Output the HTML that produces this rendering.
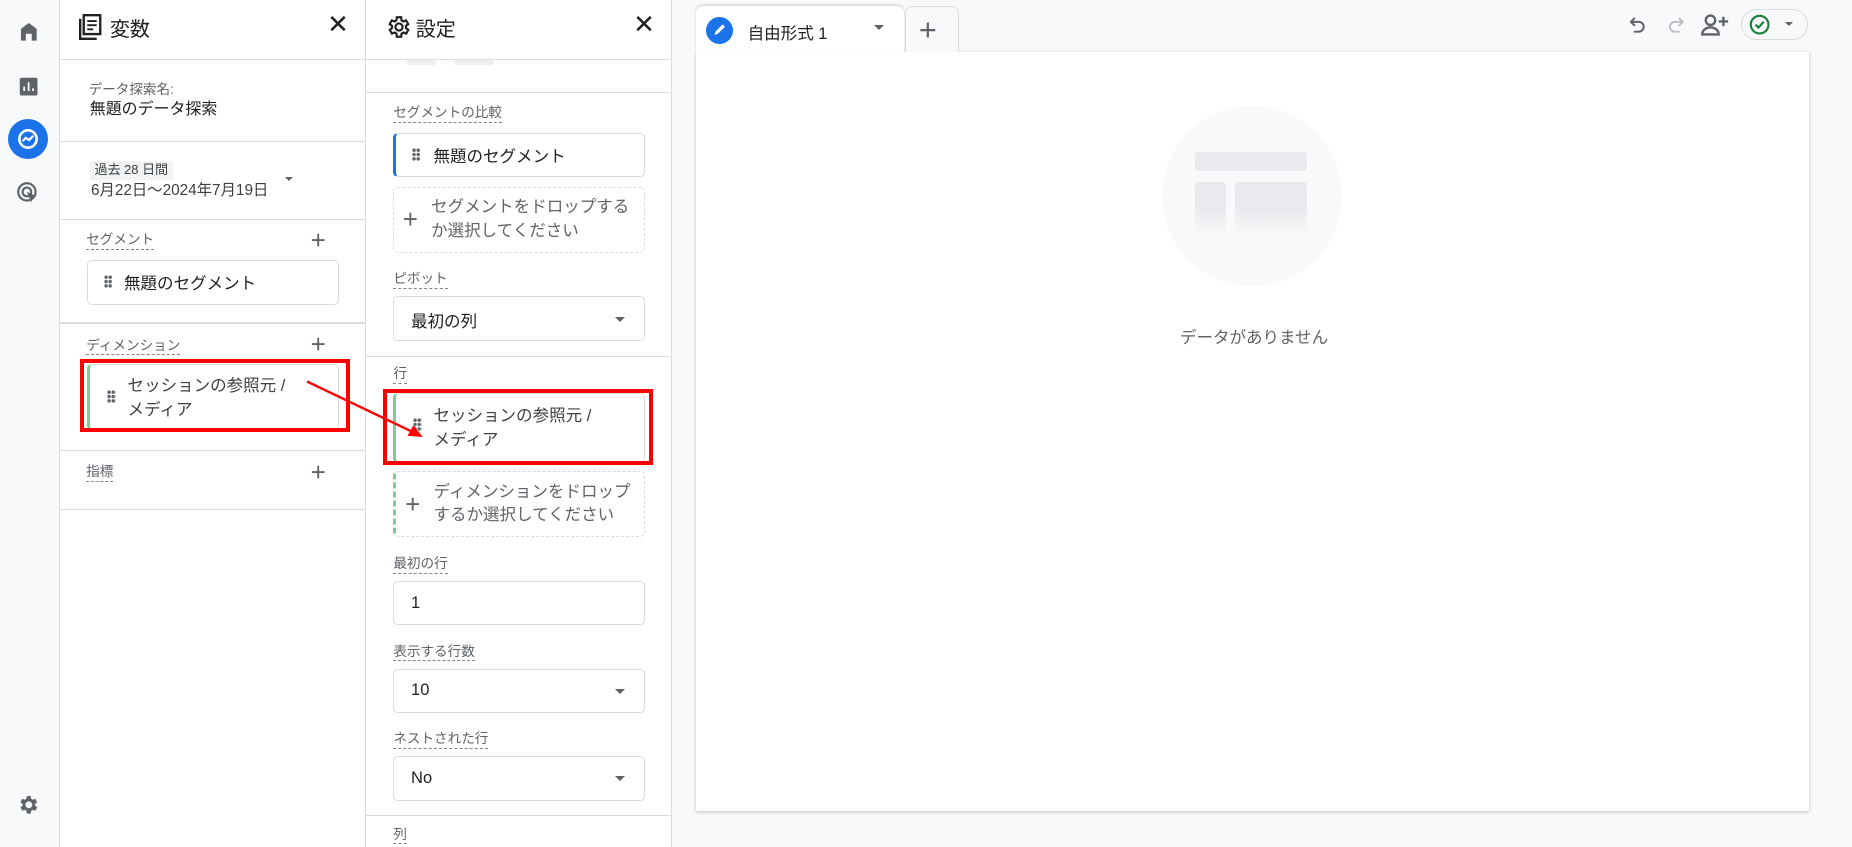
<!DOCTYPE html>
<html><head><meta charset="utf-8"><style>
*{box-sizing:border-box;margin:0;padding:0}
html,body{width:1852px;height:847px;overflow:hidden;background:#f8f9fa}
#w{zoom:1.18112;width:1568px;height:717px;position:relative;font-family:"Liberation Sans","Noto Sans CJK JP",sans-serif;color:#202124}
.a{position:absolute}
.hl{position:absolute;height:1px;background:#dadce0}
.lab{position:absolute;font-size:11.5px;color:#5f6368;border-bottom:1px dashed #80868b;line-height:15px}
.box{position:absolute;border:1px solid #dadce0;border-radius:4px;background:#fff}
.t14{font-size:14px;color:#3c4043}
.plus{position:absolute;font-size:22px;color:#5f6368;font-weight:300;line-height:20px}
.dots{position:absolute;width:7px;height:11px;background:radial-gradient(circle,#5f6368 1.4px,transparent 1.6px) 0 0/3.5px 3.7px}
.caret{position:absolute;width:0;height:0;border-left:5px solid transparent;border-right:5px solid transparent;border-top:5px solid #5f6368}
</style></head><body><div id="w">
<!-- rail -->
<div class="a" style="left:0;top:0;width:51px;height:717px;background:#f8f9fa;border-right:1px solid #dadce0"></div>
<svg class="a" style="left:14px;top:17px" width="20" height="20" viewBox="0 0 24 24"><path d="M12 3L4 9v12h5v-7h6v7h5V9z" fill="#5f6368"/></svg>
<svg class="a" style="left:15px;top:64px" width="18" height="18" viewBox="0 0 24 24"><rect x="2" y="2" width="20" height="20" rx="2" fill="#5f6368"/><path d="M7 17v-5M12 17V7M17 17v-3" stroke="#fff" stroke-width="2"/></svg>
<div class="a" style="left:7px;top:101px;width:34px;height:34px;border-radius:50%;background:#1a73e8"></div>
<svg class="a" style="left:13px;top:107px" width="22" height="22" viewBox="0 0 24 24"><circle cx="12" cy="12" r="8" fill="none" stroke="#fff" stroke-width="2.4"/><path d="M7 14l3-3 3 2 4-4" fill="none" stroke="#fff" stroke-width="2"/></svg>
<svg class="a" style="left:13px;top:152px" width="22" height="22" viewBox="0 0 24 24"><circle cx="11" cy="11" r="8" fill="none" stroke="#5f6368" stroke-width="2"/><circle cx="11" cy="11" r="4" fill="none" stroke="#5f6368" stroke-width="2"/><path d="M11 11l9 4-4 1-1 5z" fill="#5f6368"/></svg>
<svg class="a" style="left:14px;top:671px" width="20" height="20" viewBox="0 0 24 24"><path fill="#5f6368" d="M19.4 13a7.5 7.5 0 000-2l2.1-1.6-2-3.5-2.5 1a7 7 0 00-1.7-1L15 3h-4l-.4 2.9a7 7 0 00-1.7 1l-2.5-1-2 3.5L6.6 11a7.5 7.5 0 000 2l-2.1 1.6 2 3.5 2.5-1a7 7 0 001.7 1L11 21h4l.4-2.9a7 7 0 001.7-1l2.5 1 2-3.5zM13 15.5a3.5 3.5 0 110-7 3.5 3.5 0 010 7z" transform="translate(-1 0)"/></svg>
<!-- variables panel -->
<div class="a" style="left:51px;top:0;width:259px;height:717px;background:#fff;border-right:1px solid #dadce0"></div>
<svg class="a" style="left:67px;top:12px" width="20" height="22" viewBox="0 0 20 22"><rect x="4" y="1" width="14" height="16" fill="none" stroke="#202124" stroke-width="2"/><path d="M1 4v17h14" fill="none" stroke="#202124" stroke-width="2"/><path d="M7 6h8M7 9.5h8M7 13h5" stroke="#202124" stroke-width="1.6"/></svg>
<div class="a" style="left:93px;top:11px;font-size:17px">変数</div>
<div class="a" style="left:277px;top:8px;font-size:22px;color:#202124">✕</div>
<div class="hl" style="left:51px;top:50px;width:258px"></div>
<div class="a" style="left:75px;top:66px;font-size:11.5px;color:#5f6368">データ探索名:</div>
<div class="a" style="left:76px;top:81px;font-size:13.5px">無題のデータ探索</div>
<div class="hl" style="left:51px;top:119px;width:258px"></div>
<div class="a" style="left:76px;top:136px;height:16px;padding:0 4px;background:#f1f3f4;font-size:11px;line-height:16px;color:#3c4043">過去 28 日間</div>
<div class="a" style="left:77px;top:151px;font-size:13px;color:#3c4043">6月22日～2024年7月19日</div>
<div class="caret" style="left:241px;top:150px;border-width:4px 4px 0 4px"></div>
<div class="hl" style="left:51px;top:185px;width:258px"></div>
<div class="lab" style="left:73px;top:196px">セグメント</div>
<div class="plus" style="left:263px;top:194px">+</div>
<div class="box" style="left:74px;top:220px;width:213px;height:38px"></div>
<div class="dots" style="left:88px;top:233px"></div>
<div class="a t14" style="left:105px;top:229px;color:#202124">無題のセグメント</div>
<div class="hl" style="left:51px;top:273px;width:258px"></div>
<div class="lab" style="left:73px;top:285px">ディメンション</div>
<div class="plus" style="left:263px;top:282px">+</div>
<div class="box" style="left:74px;top:308px;width:213px;height:56px;border-left:3px solid #81c995"></div>
<div class="dots" style="left:91px;top:330px"></div>
<div class="a t14" style="left:108px;top:317px;line-height:20px">セッションの参照元 /<br>メディア</div>
<div class="a" style="left:68px;top:304px;width:228px;height:62px;border:4px solid #f00"></div>
<div class="hl" style="left:51px;top:381px;width:258px"></div>
<div class="lab" style="left:73px;top:392px">指標</div>
<div class="plus" style="left:263px;top:390px">+</div>
<div class="hl" style="left:51px;top:431px;width:258px"></div>
<!-- settings panel -->
<div class="a" style="left:310px;top:0;width:259px;height:717px;background:#fff;border-right:1px solid #dadce0"></div>
<svg class="a" style="left:327px;top:12px" width="22" height="22" viewBox="0 0 24 24"><path fill="none" stroke="#202124" stroke-width="2" d="M19.4 13a7.5 7.5 0 000-2l2.1-1.6-2-3.5-2.5 1a7 7 0 00-1.7-1L15 3h-4l-.4 2.9a7 7 0 00-1.7 1l-2.5-1-2 3.5L6.6 11a7.5 7.5 0 000 2l-2.1 1.6 2 3.5 2.5-1a7 7 0 001.7 1L11 21h4l.4-2.9a7 7 0 001.7-1l2.5 1 2-3.5z" transform="translate(-1 0)"/><circle cx="12" cy="12" r="3.3" fill="none" stroke="#202124" stroke-width="2"/></svg>
<div class="a" style="left:352px;top:11px;font-size:17px">設定</div>
<div class="a" style="left:536px;top:8px;font-size:22px;color:#202124">✕</div>
<div class="hl" style="left:310px;top:50px;width:258px"></div>
<div class="a" style="left:345px;top:51px;width:24px;height:4px;background:#eee;border-radius:2px"></div>
<div class="a" style="left:384px;top:51px;width:34px;height:4px;background:#eee;border-radius:2px"></div>
<div class="hl" style="left:310px;top:78px;width:258px"></div>
<div class="lab" style="left:333px;top:88px">セグメントの比較</div>
<div class="box" style="left:333px;top:113px;width:213px;height:37px;border-left:3px solid #1a73e8"></div>
<div class="dots" style="left:349px;top:125px"></div>
<div class="a t14" style="left:367px;top:121px;color:#202124">無題のセグメント</div>
<div class="box" style="left:333px;top:158px;width:213px;height:56px;border:1px dashed #dadce0"></div>
<div class="plus" style="left:341px;top:176px">+</div>
<div class="a t14" style="left:365px;top:165px;line-height:20px;color:#5f6368">セグメントをドロップする<br>か選択してください</div>
<div class="lab" style="left:333px;top:229px">ピボット</div>
<div class="box" style="left:333px;top:251px;width:213px;height:38px"></div>
<div class="a t14" style="left:348px;top:261px;color:#202124">最初の列</div>
<div class="caret" style="left:521px;top:268px"></div>
<div class="hl" style="left:310px;top:301px;width:258px"></div>
<div class="lab" style="left:333px;top:309px">行</div>
<div class="box" style="left:333px;top:333px;width:213px;height:59px;border-left:3px solid #81c995"></div>
<div class="dots" style="left:350px;top:354px"></div>
<div class="a t14" style="left:367px;top:342px;line-height:20px">セッションの参照元 /<br>メディア</div>
<div class="a" style="left:324px;top:329px;width:229px;height:65px;border:4px solid #f00"></div>
<div class="box" style="left:333px;top:399px;width:213px;height:56px;border:1px dashed #dadce0;border-left:3px dashed #81c995"></div>
<div class="plus" style="left:343px;top:417px">+</div>
<div class="a t14" style="left:367px;top:406px;line-height:20px;color:#5f6368">ディメンションをドロップ<br>するか選択してください</div>
<div class="lab" style="left:333px;top:470px">最初の行</div>
<div class="box" style="left:333px;top:492px;width:213px;height:37px"></div>
<div class="a t14" style="left:348px;top:502px;color:#202124">1</div>
<div class="lab" style="left:333px;top:544px">表示する行数</div>
<div class="box" style="left:333px;top:566px;width:213px;height:38px"></div>
<div class="a t14" style="left:348px;top:576px;color:#202124">10</div>
<div class="caret" style="left:521px;top:583px"></div>
<div class="lab" style="left:333px;top:618px">ネストされた行</div>
<div class="box" style="left:333px;top:640px;width:213px;height:38px"></div>
<div class="a t14" style="left:348px;top:650px;color:#202124">No</div>
<div class="caret" style="left:521px;top:657px"></div>
<div class="hl" style="left:310px;top:690px;width:258px"></div>
<div class="lab" style="left:333px;top:699px">列</div>
<!-- arrow -->
<svg class="a" style="left:0;top:0" width="600" height="420"><line x1="260" y1="323" x2="350" y2="366" stroke="#f00" stroke-width="2"/><path d="M358 370l-13-1 5-9z" fill="#f00"/></svg>
<!-- main -->
<div class="a" style="left:589px;top:44px;width:943px;height:643px;background:#fff;box-shadow:0 1px 3px rgba(60,64,67,.3)"></div>
<div class="a" style="left:766px;top:5px;width:46px;height:39px;background:#f8f9fa;border:1px solid #dadce0;border-bottom:none;border-radius:6px 6px 0 0"></div>
<div class="a" style="left:778px;top:10px;font-size:26px;color:#5f6368;font-weight:300">+</div>
<div class="a" style="left:589px;top:5px;width:176px;height:40px;background:#fff;border-radius:6px 6px 0 0;box-shadow:0 -1px 2px rgba(60,64,67,.2)"></div>
<div class="a" style="left:598px;top:14px;width:23px;height:23px;border-radius:50%;background:#1a73e8"></div>
<svg class="a" style="left:603px;top:19px" width="13" height="13" viewBox="0 0 13 13"><path d="M2 11l1-3 6-6 2 2-6 6z" fill="#fff"/></svg>
<div class="a" style="left:633px;top:17px;font-size:14px">自由形式 1</div>
<div class="caret" style="left:740px;top:21px"></div>
<div class="a" style="left:984px;top:90px;width:152px;height:152px;border-radius:50%;background:#f8f9fa"></div>
<div class="a" style="left:1012px;top:129px;width:95px;height:16px;border-radius:3px;background:#e8eaed"></div>
<div class="a" style="left:1012px;top:154px;width:26px;height:46px;border-radius:3px;background:linear-gradient(#e8eaed 50%,#f8f9fa)"></div>
<div class="a" style="left:1046px;top:154px;width:61px;height:46px;border-radius:3px;background:linear-gradient(#e8eaed 50%,#f8f9fa)"></div>
<div class="a" style="left:999px;top:274px;font-size:14px;color:#5f6368">データがありません</div>
<svg class="a" style="left:1377px;top:11px" width="20" height="20" viewBox="0 0 24 24"><path d="M9 5L5 9l4 4M5 9h8a5 5 0 010 10H8" fill="none" stroke="#5f6368" stroke-width="2"/></svg>
<svg class="a" style="left:1409px;top:11px" width="20" height="20" viewBox="0 0 24 24"><path d="M15 5l4 4-4 4M19 9h-8a5 5 0 000 10h5" fill="none" stroke="#bdc1c6" stroke-width="2"/></svg>
<svg class="a" style="left:1440px;top:10px" width="24" height="22" viewBox="0 0 24 22"><circle cx="8" cy="7" r="4" fill="none" stroke="#5f6368" stroke-width="2"/><path d="M1 19c0-4 4-6 7-6s7 2 7 6z" fill="none" stroke="#5f6368" stroke-width="2"/><path d="M19 4v8M15 8h8" stroke="#5f6368" stroke-width="2"/></svg>
<div class="a" style="left:1474px;top:8px;width:57px;height:26px;border:1px solid #dadce0;border-radius:13px"></div>
<svg class="a" style="left:1481px;top:12px" width="18" height="18" viewBox="0 0 18 18"><circle cx="9" cy="9" r="7.5" fill="none" stroke="#188038" stroke-width="1.8"/><path d="M5.5 9l2.5 2.5 4.5-5" fill="none" stroke="#188038" stroke-width="1.8"/></svg>
<div class="caret" style="left:1511px;top:19px;border-width:4px 4px 0 4px"></div>
</div></body></html>
